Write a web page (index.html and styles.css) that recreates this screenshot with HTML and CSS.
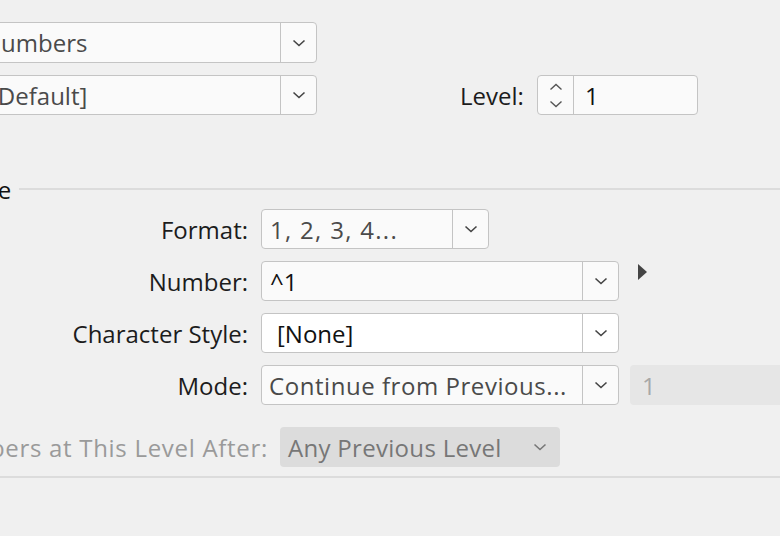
FILE: index.html
```html
<!DOCTYPE html>
<html>
<head>
<meta charset="utf-8">
<link rel="stylesheet" href="styles.css">
</head>
<body>
<div class="page">
  <div class="top">
    <div class="row r1">
      <div class="select head-select"><span class="val v-numbers">Numbers</span><span class="arrow"><svg width="14" height="8" viewBox="0 0 14 8"><path d="M1.5 1.5l5.5 5 5.5-5" fill="none" stroke="#444" stroke-width="1.6"/></svg></span></div>
    </div>
    <div class="row r2">
      <div class="select head-select"><span class="val v-default">[Default]</span><span class="arrow"><svg width="14" height="8" viewBox="0 0 14 8"><path d="M1.5 1.5l5.5 5 5.5-5" fill="none" stroke="#444" stroke-width="1.6"/></svg></span></div>
      <span class="lbl level-lbl">Level:</span>
      <div class="stepper">
        <span class="spin">
          <svg width="14" height="8" viewBox="0 0 14 8"><path d="M1.5 6.5l5.5-5 5.5 5" fill="none" stroke="#555" stroke-width="1.4"/></svg>
          <svg width="14" height="8" viewBox="0 0 14 8"><path d="M1.5 1.5l5.5 5 5.5-5" fill="none" stroke="#555" stroke-width="1.4"/></svg>
        </span>
        <span class="num">1</span>
      </div>
    </div>
  </div>

  <div class="section">
    <span class="sect-title">Numbering Style</span>
    <span class="rule"></span>
  </div>

  <div class="form">
    <div class="frow">
      <span class="flabel">Format:</span>
      <div class="select fmt"><span class="val grey wide-digits">1, 2, 3, 4...</span><span class="arrow"><svg width="14" height="8" viewBox="0 0 14 8"><path d="M1.5 1.5l5.5 5 5.5-5" fill="none" stroke="#444" stroke-width="1.6"/></svg></span></div>
    </div>
    <div class="frow">
      <span class="flabel">Number:</span>
      <div class="select long"><span class="val dark">^1</span><span class="arrow"><svg width="14" height="8" viewBox="0 0 14 8"><path d="M1.5 1.5l5.5 5 5.5-5" fill="none" stroke="#444" stroke-width="1.6"/></svg></span></div>
      <span class="tri"></span>
    </div>
    <div class="frow">
      <span class="flabel">Character Style:</span>
      <div class="select long white"><span class="val dark indent">[None]</span><span class="arrow"><svg width="14" height="8" viewBox="0 0 14 8"><path d="M1.5 1.5l5.5 5 5.5-5" fill="none" stroke="#444" stroke-width="1.6"/></svg></span></div>
    </div>
    <div class="frow">
      <span class="flabel">Mode:</span>
      <div class="select long"><span class="val grey spaced">Continue from Previous...</span><span class="arrow"><svg width="14" height="8" viewBox="0 0 14 8"><path d="M1.5 1.5l5.5 5 5.5-5" fill="none" stroke="#444" stroke-width="1.6"/></svg></span></div>
      <div class="dis-field">1</div>
    </div>
  </div>

  <div class="lastrow">
    <span class="flabel restart">Restart Numbers at This Level After:</span>
    <div class="dis-select"><span class="dis-text">Any Previous Level</span><svg width="14" height="8" viewBox="0 0 14 8"><path d="M1.5 1.5l5.5 5 5.5-5" fill="none" stroke="#777" stroke-width="1.6"/></svg></div>
  </div>
  <div class="bottom-rule"></div>
</div>
</body>
</html>
```

FILE: styles.css
```css
html, body {
  margin: 0;
  padding: 0;
}
body {
  width: 780px;
  height: 536px;
  overflow: hidden;
  background: #f0f0f0;
  font-family: "Open Sans", "Noto Sans", sans-serif;
  font-size: 24px;
  color: #1c1c1c;
}
.page {
  width: 780px;
  overflow: hidden;
}
.top {
  padding-top: 22px;
}
.row {
  display: flex;
  align-items: center;
}
.r2 {
  margin-top: 12px;
}
.select {
  flex-shrink: 0;
  box-sizing: border-box;
  height: 40px;
  display: flex;
  align-items: stretch;
  border: 1.5px solid #c4c4c4;
  border-radius: 4px;
  background: #fafafa;
}
.select.white {
  background: #ffffff;
}
.select .val {
  flex: 1;
  display: flex;
  align-items: center;
  padding-left: 8px;
  white-space: nowrap;
  overflow: hidden;
  color: #4a4a4a;
}
.select .val.dark {
  color: #111;
}
.select .val.indent {
  padding-left: 15px;
}
.select .val.spaced {
  padding-left: 7px;
  letter-spacing: 0.55px;
}
.select .val.wide-digits {
  letter-spacing: 1.3px;
}
.select .arrow {
  flex-shrink: 0;
  width: 35px;
  border-left: 1.5px solid #c4c4c4;
  display: flex;
  align-items: center;
  justify-content: center;
}
.head-select {
  margin-left: -40px;
  width: 357px;
}
.r1 .head-select {
  height: 41px;
}
.select .val.v-numbers {
  padding-left: 22px;
}
.select .val.v-default {
  padding-left: 29px;
}
.level-lbl {
  flex-shrink: 0;
  margin-left: 143px;
  width: 77px;
}
.stepper {
  flex-shrink: 0;
  box-sizing: border-box;
  width: 161px;
  height: 40px;
  display: flex;
  border: 1.5px solid #c4c4c4;
  border-radius: 4px;
  background: #fafafa;
}
.spin {
  width: 35px;
  border-right: 1.5px solid #c4c4c4;
  display: flex;
  flex-direction: column;
  align-items: center;
  justify-content: center;
  gap: 9px;
}
.num {
  display: flex;
  align-items: center;
  padding-left: 11px;
  color: #111;
}
.section {
  margin-top: 59px;
  height: 30px;
  display: flex;
  align-items: center;
  margin-left: -175px;
}
.sect-title {
  white-space: nowrap;
  color: #111;
}
.rule {
  flex: 1;
  height: 2px;
  background: #dcdcdc;
  margin-left: 8px;
}
.form {
  padding-top: 5px;
  display: flex;
  flex-direction: column;
  gap: 12px;
}
.frow {
  display: flex;
  align-items: center;
  height: 40px;
}
.flabel {
  flex-shrink: 0;
  width: 248px;
  margin-right: 13px;
  display: flex;
  justify-content: flex-end;
  white-space: nowrap;
  color: #1c1c1c;
}
.fmt {
  width: 228px;
}
.long {
  width: 358px;
}
.tri {
  flex-shrink: 0;
  align-self: flex-start;
  margin-top: 3px;
  margin-left: 19px;
  width: 0;
  height: 0;
  border-left: 9px solid #444;
  border-top: 8px solid transparent;
  border-bottom: 8px solid transparent;
}
.dis-field {
  flex-shrink: 0;
  margin-left: 11px;
  width: 200px;
  height: 40px;
  box-sizing: border-box;
  background: #e6e6e6;
  border-radius: 4px;
  color: #a8a8a8;
  display: flex;
  align-items: center;
  padding-left: 12px;
}
.lastrow {
  margin-top: 22px;
  display: flex;
  align-items: center;
  height: 40px;
}
.flabel.restart {
  width: 268px;
  margin-right: 12px;
  color: #9a9a9a;
  letter-spacing: 0.7px;
}
.dis-select {
  flex-shrink: 0;
  box-sizing: border-box;
  width: 280px;
  height: 40px;
  background: #dcdcdc;
  border-radius: 4px;
  display: flex;
  align-items: center;
  justify-content: space-between;
  padding: 0 13px 0 8px;
  color: #777;
}
.dis-text {
  letter-spacing: 0.3px;
}
.bottom-rule {
  margin-top: 9px;
  height: 2px;
  background: #dcdcdc;
}
```
